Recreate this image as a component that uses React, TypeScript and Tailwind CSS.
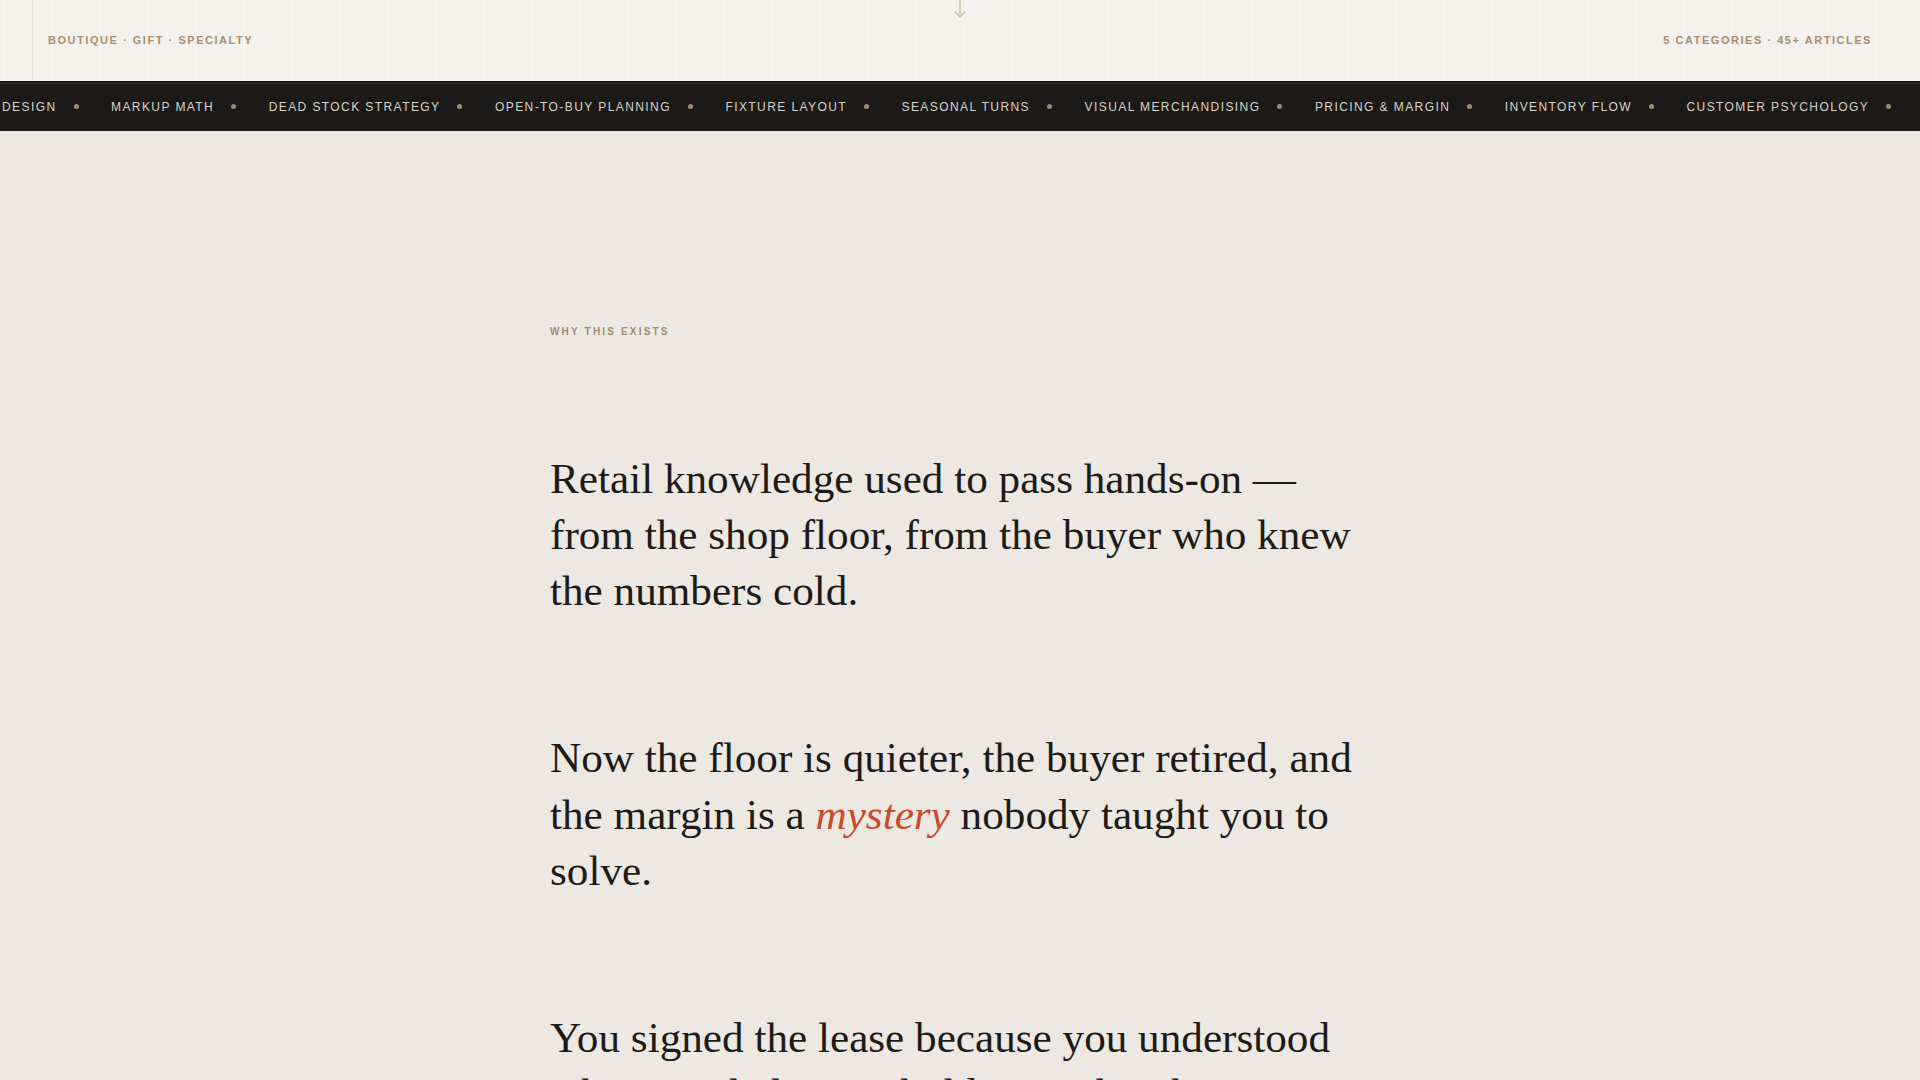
import React from 'react';

const topics = [
  'Design',
  'Markup Math',
  'Dead Stock Strategy',
  'Open-to-Buy Planning',
  'Fixture Layout',
  'Seasonal Turns',
  'Visual Merchandising',
  'Pricing & Margin',
  'Inventory Flow',
  'Customer Psychology',
  'Window Design',
];

function TopBar() {
  return (
    <header className="relative h-[81px] bg-[#f5f1ec] bg-[repeating-linear-gradient(90deg,rgba(120,100,70,0.025)_0,rgba(120,100,70,0.025)_1px,transparent_1px,transparent_48px)]">
      {/* left rule */}
      <div className="absolute left-[32px] top-0 bottom-0 w-px bg-[#e6dfd6]" />
      <div className="grid h-full grid-cols-[1fr_auto_1fr] items-center px-12 font-['Liberation_Sans',Arial,sans-serif] text-[11px] font-bold uppercase tracking-[0.14em] text-[#a58f6f]">
        <span>Boutique · Gift · Specialty</span>
        <svg
          className="self-start"
          width="14"
          height="19"
          viewBox="0 0 14 19"
          fill="none"
          stroke="#c8bca7"
          strokeWidth="1.3"
          strokeLinecap="round"
          strokeLinejoin="round"
        >
          <path d="M7 0 V17" />
          <path d="M2 12 L7 17 L12 12" />
        </svg>
        <span className="justify-self-end">5 Categories · 45+ Articles</span>
      </div>
    </header>
  );
}

function TopicStrip() {
  return (
    <nav className="h-[50px] overflow-hidden border-t border-[#111] bg-[#1b1a19] shadow-[inset_0_2px_0_#262524]">
      <div className="flex h-full items-center whitespace-nowrap pl-[2px] font-['Liberation_Sans',Arial,sans-serif] text-[12px] font-medium uppercase tracking-[0.118em] text-[#d8d2c8]">
        {topics.map((t) => (
          <div key={t} className="flex items-center">
            <span>{t}</span>
            <span className="ml-[17px] mr-[32.5px] h-[5px] w-[5px] rounded-full bg-[#9f8b6b]" />
          </div>
        ))}
      </div>
    </nav>
  );
}

export default function App() {
  return (
    <div className="min-h-screen bg-[#ede8e2]">
      <TopBar />
      <TopicStrip />

      <section className="mx-auto w-[820px] pt-[193px] pb-32">
        <div className="flex flex-col gap-[111px] font-['Liberation_Serif','Times_New_Roman',serif] text-[43.2px] leading-[1.3] text-[#1d1b18]">
          <p className="font-['Liberation_Sans',Arial,sans-serif] text-[10px] font-bold uppercase leading-[16px] tracking-[0.217em] text-[#9d8c72]">
            Why this exists
          </p>
          <p>
            Retail knowledge used to pass hands-on — from the shop floor, from the buyer who knew the
            numbers cold.
          </p>
          <p>
            Now the floor is quieter, the buyer retired, and the margin is a{' '}
            <em className="text-[#c94a2c]">mystery</em> nobody taught you to solve.
          </p>
          <p>
            You signed the lease because you understood what people love to hold, not what the
            numbers hide behind it.
          </p>
        </div>
      </section>
    </div>
  );
}
